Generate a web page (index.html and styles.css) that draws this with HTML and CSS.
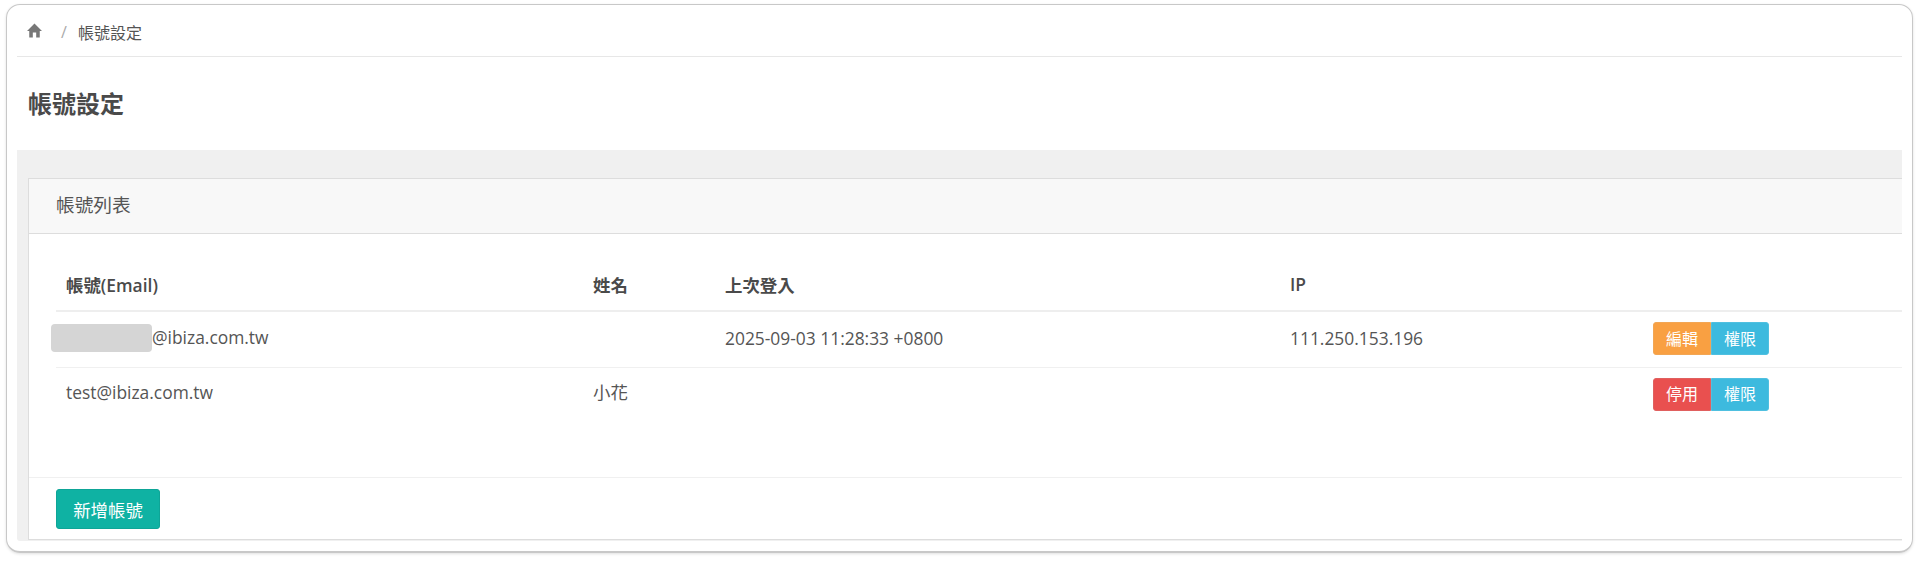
FILE: index.html
```html
<!DOCTYPE html>
<html>
<head>
    <title>帳號設定</title>
    <link rel="stylesheet" href="styles.css">
</head>
<body>
  <div class="frame">
    <div class="breadcrumb">
      <svg class="home" viewBox="0 0 16 16"><path d="M8 0.5 L16 8.4 H13.6 V15.5 H9.8 V10 H6.2 V15.5 H2.4 V8.4 H0 Z"/></svg>
      <span class="sep">/</span>
      <span>帳號設定</span>
    </div>
    <h1 class="page-title">帳號設定</h1>
    <div class="content">
      <div class="panel">
        <div class="panel-heading">帳號列表</div>
        <div class="panel-body">
          <table>
            <thead>
              <tr>
                <th class="col-email">帳號(Email)</th>
                <th class="col-name">姓名</th>
                <th class="col-login">上次登入</th>
                <th class="col-ip">IP</th>
                <th></th>
              </tr>
            </thead>
            <tbody>
              <tr>
                <td><span class="redact"></span>@ibiza.com.tw</td>
                <td></td>
                <td>2025-09-03 11:28:33 +0800</td>
                <td>111.250.153.196</td>
                <td class="actions"><div class="btn-group"><a class="btn orange">編輯</a><a class="btn blue">權限</a></div></td>
              </tr>
              <tr>
                <td>test@ibiza.com.tw</td>
                <td>小花</td>
                <td></td>
                <td></td>
                <td class="actions"><div class="btn-group"><a class="btn red">停用</a><a class="btn blue">權限</a></div></td>
              </tr>
            </tbody>
          </table>
        </div>
        <div class="panel-footer"><a class="btn-add">新增帳號</a></div>
      </div>
    </div>
  </div>
</body>
</html>
```

FILE: styles.css
```css
* {
    box-sizing: border-box;
}

html, body {
    height: 100%;
}

body {
    margin: 0;
    padding: 4px 7px 8px 6px;
    background-color: #fff;
    color: #444;
    font-family: "Open Sans", "Noto Sans CJK TC", sans-serif;
    font-size: 17.4px;
}

.frame {
    height: 100%;
    padding: 0 10px 10px 10px;
    border: 1px solid #c8c8c8;
    border-bottom-width: 2px;
    border-radius: 14px;
    box-shadow: 0 1px 3px rgba(0, 0, 0, 0.12);
    display: flex;
    flex-direction: column;
}

.breadcrumb {
    height: 52px;
    padding: 3px 0 0 10px;
    border-bottom: 1px solid #e7e7e7;
    display: flex;
    align-items: center;
    font-size: 16px;
    color: #555;
}

.home {
    width: 15px;
    height: 15px;
    fill: #777;
    margin-top: -4px;
}

.sep {
    color: #aaa;
    margin: 0 11px 0 19px;
}

.page-title {
    height: 93px;
    margin: 0;
    padding: 0 0 3px 11px;
    display: flex;
    align-items: center;
    font-size: 24px;
    font-weight: 700;
    color: #4a4a4a;
}

.content {
    flex: 1;
    padding: 28px 0 0 11px;
    background-color: #f0f0f0;
    border-radius: 0 0 0 3px;
    display: flex;
    flex-direction: column;
}

.panel {
    flex: 1;
    margin-bottom: 1px;
    background-color: #fff;
    border: 1px solid #ddd;
    border-right: 0;
    display: flex;
    flex-direction: column;
}

.panel-heading {
    height: 55px;
    padding: 0 0 6px 27px;
    background-color: #f8f8f8;
    border-bottom: 1px solid #ddd;
    display: flex;
    align-items: center;
    font-size: 18.7px;
    color: #555;
}

.panel-body {
    height: 243px;
    padding: 26px 0 0 27px;
}

table {
    width: 100%;
    border-collapse: collapse;
    table-layout: fixed;
}

th {
    height: 51px;
    padding: 0 10px 2px;
    text-align: left;
    font-weight: 600;
    border-bottom: 2px solid #eee;
    color: #4a4a4a;
}

td {
    height: 56px;
    padding: 0 10px 3px;
    border-bottom: 1px solid #f0f0f0;
    color: #555;
    line-height: 24px;
}

td.actions {
    padding-bottom: 1px;
}

tbody tr:last-child td {
    border-bottom: 0;
    vertical-align: top;
    padding-top: 12px;
}

tbody tr:last-child td.actions {
    padding-top: 10px;
}

.col-email {
    width: 527px;
}

.col-name {
    width: 132px;
}

.col-login {
    width: 565px;
}

.col-ip {
    width: 363px;
}

.redact {
    display: inline-block;
    width: 101px;
    height: 28px;
    margin-left: -15px;
    background-color: #d5d5d5;
    border-radius: 4px;
    vertical-align: -8px;
}

.btn-group {
    display: flex;
}

.btn {
    width: 58px;
    height: 33px;
    display: flex;
    align-items: center;
    justify-content: center;
    color: #fff;
    font-size: 16px;
    border: 1px solid transparent;
}

.btn:first-child {
    border-radius: 3px 0 0 3px;
}

.btn:last-child {
    border-radius: 0 3px 3px 0;
}

.orange {
    background-color: #f9a042;
    border-color: #f2a654;
}

.red {
    background-color: #e9504f;
    border-color: #e0605f;
}

.blue {
    background-color: #3dbade;
    border-color: #4fc0e0;
}

.panel-footer {
    flex: 1;
    padding: 11px 0 0 27px;
    border-top: 1px solid #f0f0f0;
}

.btn-add {
    width: 104px;
    height: 40px;
    display: flex;
    align-items: center;
    justify-content: center;
    background-color: #0fb2a3;
    border: 1px solid #0ea597;
    border-radius: 3px;
    color: #fff;
    font-size: 17.4px;
}
```
